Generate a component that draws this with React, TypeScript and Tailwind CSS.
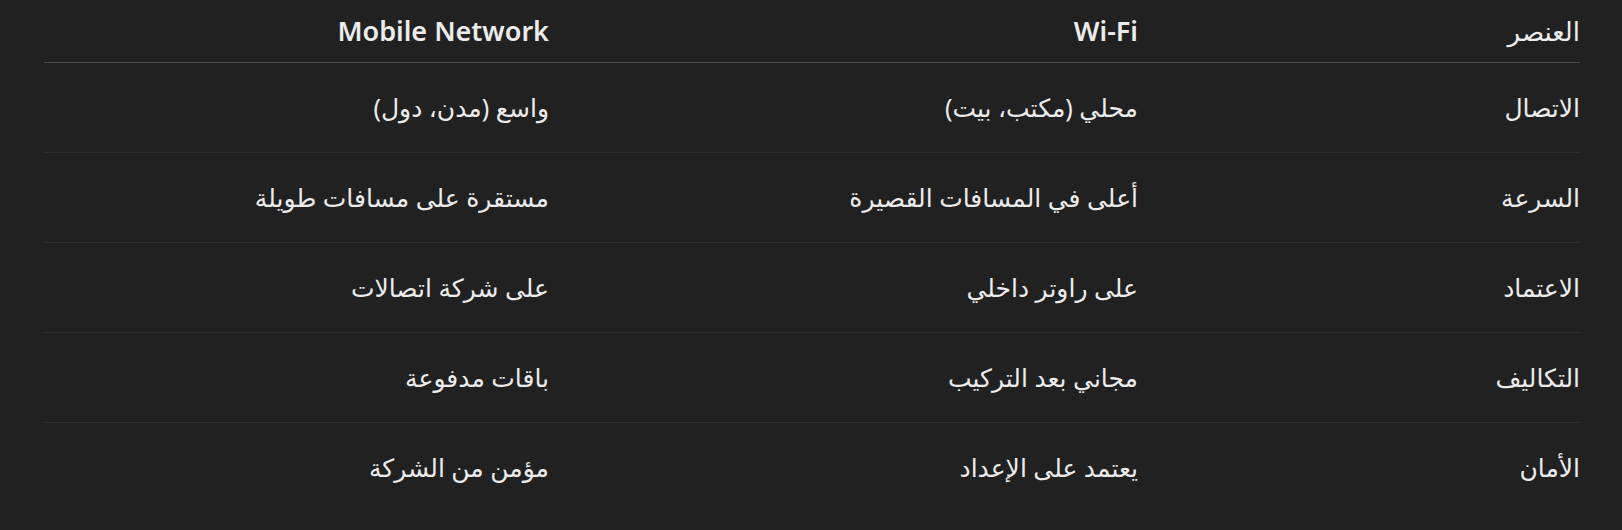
const rows: [string, string, string][] = [
  ['الاتصال', 'محلي (مكتب، بيت)', 'واسع (مدن، دول)'],
  ['السرعة', 'أعلى في المسافات القصيرة', 'مستقرة على مسافات طويلة'],
  ['الاعتماد', 'على راوتر داخلي', 'على شركة اتصالات'],
  ['التكاليف', 'مجاني بعد التركيب', 'باقات مدفوعة'],
  ['الأمان', 'يعتمد على الإعداد', 'مؤمن من الشركة'],
];

const cols = 'grid grid-cols-[442px_589px_505px]';

export default function App() {
  return (
    <div
      dir="rtl"
      className="w-[1622px] h-[530px] bg-[#212121] text-[#ececec] overflow-hidden"
      style={{ fontFamily: '"Noto Sans", "DejaVu Sans", sans-serif' }}
    >
      <div className="w-[1536px] mr-[42px]">
        {/* header */}
        <div className={`${cols} h-[63px] items-center border-b border-[#4a4a4a] text-[27px] font-semibold`}>
          <div className="font-medium text-[26px]">العنصر</div>
          <div>Wi-Fi</div>
          <div>Mobile Network</div>
        </div>

        {rows.map((r, i) => (
          <div
            key={i}
            className={`${cols} h-[90px] items-center text-[25px] ${
              i < rows.length - 1 ? 'border-b border-[#2f2f2f]' : ''
            }`}
          >
            <div>{r[0]}</div>
            <div>{r[1]}</div>
            <div>{r[2]}</div>
          </div>
        ))}
      </div>
    </div>
  );
}
